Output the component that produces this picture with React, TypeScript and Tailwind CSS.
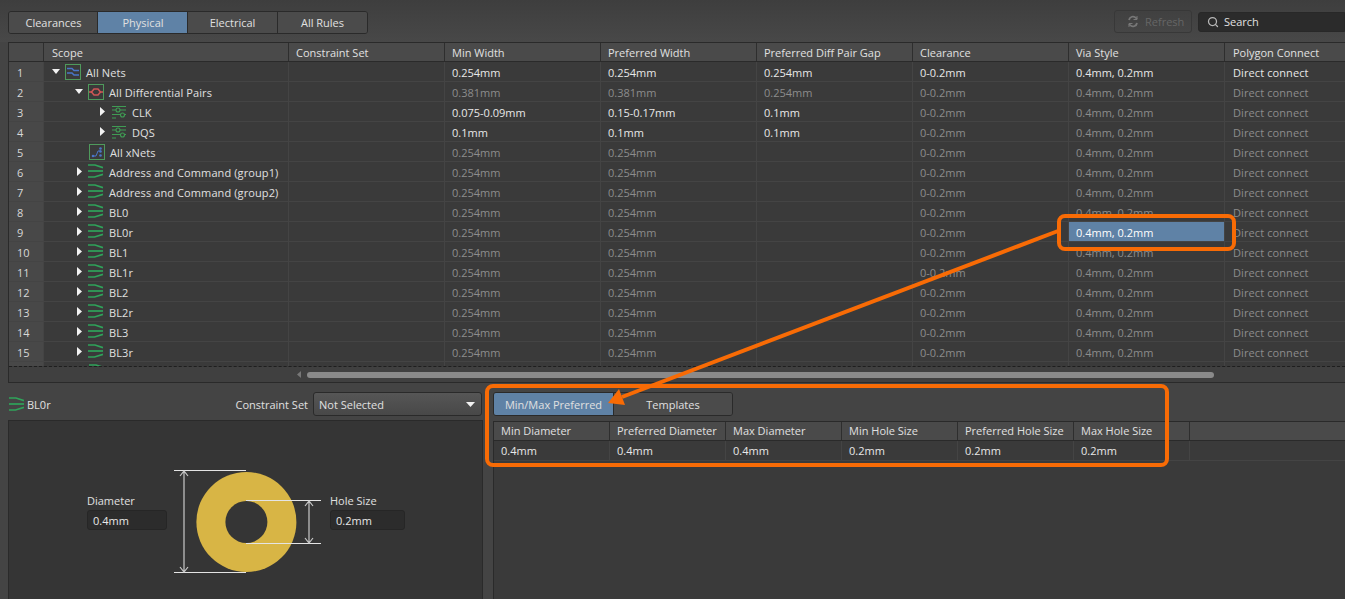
import { Search } from 'lucide-react'

type IconKind = 'nets' | 'pairs' | 'group' | 'xnets' | 'net'

const B = 'text-[#e8e8e8]'
const D = 'text-[#8c8c8c]'

const rows: { name: string; indent: string; arrow?: 'down' | 'right'; icon: IconKind; cells: [string, string, string]; bright?: string; allBright?: boolean }[] = [
  { name: 'All Nets', indent: 'pl-2', arrow: 'down', icon: 'nets', cells: ['0.254mm', '0.254mm', '0.254mm'], allBright: true },
  { name: 'All Differential Pairs', indent: 'pl-[31px]', arrow: 'down', icon: 'pairs', cells: ['0.381mm', '0.381mm', '0.254mm'] },
  { name: 'CLK', indent: 'pl-[56px]', arrow: 'right', icon: 'group', cells: ['0.075-0.09mm', '0.15-0.17mm', '0.1mm'], bright: 'y' },
  { name: 'DQS', indent: 'pl-[56px]', arrow: 'right', icon: 'group', cells: ['0.1mm', '0.1mm', '0.1mm'], bright: 'y' },
  { name: 'All xNets', indent: 'pl-[45px]', icon: 'xnets', cells: ['0.254mm', '0.254mm', ''] },
  ...['Address and Command (group1)', 'Address and Command (group2)', 'BL0', 'BL0r', 'BL1', 'BL1r', 'BL2', 'BL2r', 'BL3', 'BL3r'].map((name) => ({
    name,
    indent: 'pl-[33px]',
    arrow: 'right' as const,
    icon: 'net' as const,
    cells: ['0.254mm', '0.254mm', ''] as [string, string, string],
  })),
]

const headers = ['Min Width', 'Preferred Width', 'Preferred Diff Pair Gap', 'Clearance', 'Via Style']
const viaHeaders = ['Min Diameter', 'Preferred Diameter', 'Max Diameter', 'Min Hole Size', 'Preferred Hole Size', 'Max Hole Size']
const viaValues = ['0.4mm', '0.4mm', '0.4mm', '0.2mm', '0.2mm', '0.2mm']

function NetIcon() {
  return (
    <svg width="15" height="14" viewBox="0 0 15 14" fill="none" stroke="#2fa35a" strokeWidth="1.700" className="shrink-0">
      <path d="M0 1h7l8 2.600" />
      <path d="M0 7h15" />
      <path d="M0 13h6.500l8.500-2.600" />
    </svg>
  )
}

function TreeIcon({ kind }: { kind: IconKind }) {
  if (kind === 'net') return <div className="-mt-[2px]"><NetIcon /></div>
  if (kind === 'group') {
    return (
      <svg width="16" height="16" viewBox="0 0 16 16" fill="none" stroke="#3f9c54" strokeWidth="1.100" className="shrink-0">
        <path d="M1 2.500h14M1 6h4M9 6h6M1 10.500h9M13 10.500h2M1 14h4" />
        <circle cx="7" cy="6" r="2" />
        <circle cx="11.500" cy="11" r="2" />
      </svg>
    )
  }
  return (
    <svg width="16" height="16" viewBox="0 0 16 16" fill="none" className="shrink-0">
      <rect x="0.500" y="0.500" width="15" height="15" stroke="#4f9a5c" />
      {kind === 'nets' && <path d="M2 4.500h5l2 2h5M2 9h5l2 2h5" stroke="#4a76c8" strokeWidth="1.500" />}
      {kind === 'pairs' && (
        <>
          <path d="M1 8h3M12 8h3" stroke="#d05656" strokeWidth="1.500" />
          <path d="M3.500 8l2.500-3h4l2.500 3-2.500 3H6z" stroke="#d05656" strokeWidth="1.500" />
        </>
      )}
      {kind === 'xnets' && (
        <>
          <path d="M4 12h3l2-5h3" stroke="#4a76c8" strokeWidth="1" />
          <circle cx="11.500" cy="4.500" r="1.300" fill="#4a76c8" />
          <circle cx="11.500" cy="7.500" r="1.300" fill="#4a76c8" />
          <circle cx="11.500" cy="11.500" r="1.300" fill="#4a76c8" />
          <circle cx="4" cy="12" r="1.300" fill="#4a76c8" />
        </>
      )}
    </svg>
  )
}

function Arrow({ dir }: { dir?: 'down' | 'right' }) {
  if (dir === 'down') {
    return (
      <svg width="8" height="5" viewBox="0 0 8 5" className="shrink-0 mr-[5px]">
        <path d="M0 0h8L4 5z" fill="#f2f2f2" />
      </svg>
    )
  }
  if (dir === 'right') {
    return (
      <svg width="5" height="9" viewBox="0 0 5 9" className="shrink-0 mr-[6px]">
        <path d="M0 0l5 4.500L0 9z" fill="#f2f2f2" />
      </svg>
    )
  }
  return null
}

function DimensionDrawing() {
  return (
    <svg width="150" height="112" viewBox="0 0 150 112" fill="none" className="shrink-0">
      <circle cx="72.400" cy="56" r="50" fill="#d8b545" />
      <circle cx="72.400" cy="56" r="21" fill="#353535" />
      <g stroke="#e4e4e4" strokeWidth="1">
        <path d="M0 4.500h72M0 106.500h72M72 34.500h75M72 77.500h75" />
      </g>
      <g stroke="#c8c8c8" strokeWidth="1.200">
        <path d="M10 5v101M6 10l4-5 4 5M6 101l4 5 4-5" />
        <path d="M135 35v42M131 40l4-5 4 5M131 72l4 5 4-5" />
      </g>
    </svg>
  )
}

export default function App() {
  return (
    <div className="relative w-[1345px] h-[599px] overflow-hidden flex flex-col bg-[#444444] text-[11px] leading-none text-[#e0e0e0] font-['Open_Sans',sans-serif]">
      {/* top toolbar */}
      <div className="h-[42px] shrink-0 flex items-start pt-[11px] pl-2 bg-gradient-to-b from-[#3e3e3e] to-[#484848]">
        <div className="flex h-[23px] rounded-[3px] border border-[#2a2a2a] overflow-hidden">
          <div className="w-[89px] pl-[1px] flex items-center justify-center bg-[#4b4b4b] border-r border-[#2a2a2a]">Clearances</div>
          <div className="w-[90px] pl-[1px] flex items-center justify-center bg-[#5f82a6] border-r border-[#2a2a2a]">Physical</div>
          <div className="w-[90px] flex items-center justify-center bg-[#4b4b4b] border-r border-[#2a2a2a]">Electrical</div>
          <div className="w-[89px] flex items-center justify-center bg-[#4b4b4b]">All Rules</div>
        </div>
        <div className="ml-auto flex -mt-[1px]">
          <div className="w-[78px] h-[23px] flex items-center pl-[12px] gap-[6px] rounded-[3px] border border-[#383838] text-[#666666]">
            <svg width="12" height="13" viewBox="0 0 12 13" fill="none" stroke="#777777" strokeWidth="1.800">
              <path d="M2 5a4 4 0 0 1 7-2l1 1M10 8a4 4 0 0 1-7 2L2 9" />
              <path d="M10 1v3.500H6.500M2 12V8.500h3.500" strokeWidth="1" />
            </svg>
            Refresh
          </div>
          <div className="ml-[6px] mt-[2px] w-[147px] h-[20px] flex items-center pl-2 pb-[1px] gap-[5px] rounded-l-[3px] bg-[#2b2b2b] border border-[#282828]">
            <Search size={12} strokeWidth={2.500} className="text-[#b8b8b8]" />
            Search
          </div>
        </div>
      </div>

      {/* rules table */}
      <div className="ml-2 h-[341px] shrink-0 flex flex-col border-t border-l border-b border-[#2a2a2a]">
        <div className="h-[19px] shrink-0 flex bg-[#4a4a4a] border-b border-[#2a2a2a]">
          <div className="w-[35px] border-r border-[#2e2e2e]" />
          <div className="w-[245px] pl-[8px] flex items-center border-r border-[#2e2e2e]">Scope</div>
          <div className="w-[156px] pl-[7px] flex items-center border-r border-[#2e2e2e]">Constraint Set</div>
          {headers.map((h) => (
            <div key={h} className="w-[156px] pl-[7px] flex items-center border-r border-[#2e2e2e]">{h}</div>
          ))}
          <div className="flex-1 pl-[8px] flex items-center">Polygon Connect</div>
        </div>
        <div className="h-[305px] overflow-hidden border-b border-dashed border-[#1e1e1e] bg-[#3a3a3a]">
          {[...rows, { name: '', indent: 'pl-[45px]', arrow: undefined, icon: 'net' as IconKind, cells: ['', '', ''] as [string, string, string] }].map((r, i) => {
            const bright = r.allBright || r.bright
            return (
              <div key={i} className="h-[20px] flex border-b border-[#444444]">
                <div className="w-[35px] flex items-center pl-[8px] pt-[2px] bg-[#484848] border-r border-[#444444] text-[#d8d8d8]">
                  {i < 15 ? i + 1 : ''}
                </div>
                <div className={`w-[245px] flex items-center border-r border-[#444444] ${r.indent}`}>
                  <Arrow dir={r.arrow} />
                  <TreeIcon kind={r.icon} />
                  {i < 15 && <span className={r.icon === 'net' ? 'ml-[6px] mt-[2px] whitespace-nowrap tracking-[0.1px]' : 'ml-[5px] mt-[2px] whitespace-nowrap tracking-[0.1px]'}>{r.name}</span>}
                </div>
                <div className="w-[156px] border-r border-[#444444]" />
                {r.cells.map((c, j) => (
                  <div key={j} className={`w-[156px] pl-[7px] pt-[2px] flex items-center border-r border-[#444444] ${bright ? B : D}`}>{c}</div>
                ))}
                <div className={`w-[156px] pl-[7px] pt-[2px] flex items-center border-r border-[#444444] ${r.allBright ? B : D}`}>{i < 15 ? '0-0.2mm' : ''}</div>
                {i === 8 ? (
                  <div className="w-[156px] pl-[7px] pt-[2px] flex items-center border-r border-[#444444] bg-[#5f82a6] text-white">0.4mm, 0.2mm</div>
                ) : (
                  <div className={`w-[156px] pl-[7px] pt-[2px] flex items-center border-r border-[#444444] ${r.allBright ? B : D}`}>{i < 15 ? '0.4mm, 0.2mm' : ''}</div>
                )}
                <div className={`flex-1 pl-[8px] pt-[2px] flex items-center tracking-[0.1px] ${r.allBright ? B : D}`}>{i < 15 ? 'Direct connect' : ''}</div>
              </div>
            )
          })}
        </div>
        <div className="flex-1 flex items-center bg-[#404040] pl-[288px]">
          <svg width="4" height="7" viewBox="0 0 4 7" className="mr-[6px]"><path d="M4 0v7L0 3.500z" fill="#777777" /></svg>
          <div className="w-[907px] h-[6px] rounded-[3px] bg-[#8a8a8a]" />
        </div>
      </div>

      {/* detail area */}
      <div className="flex-1 min-h-0 flex pl-2 bg-[#444444]">
        <div className="w-[475px] shrink-0 flex flex-col">
          <div className="h-[37px] shrink-0 flex items-center pt-[5px]">
            <div className="ml-[1px]"><NetIcon /></div>
            <span className="ml-[3px] mt-[1px]">BL0r</span>
            <span className="ml-auto mr-[5px] mt-[1px]">Constraint Set</span>
            <div className="w-[169px] h-[24px] mr-[1px] flex items-center justify-between pl-[5px] pr-[6px] rounded-[3px] border border-[#2a2a2a] bg-gradient-to-b from-[#565656] to-[#484848]">
              <span className="mt-[1px]">Not Selected</span>
              <svg width="9" height="5" viewBox="0 0 9 5"><path d="M0 0h9L4.500 5z" fill="#f2f2f2" /></svg>
            </div>
          </div>
          <div className="flex-1 flex items-start pl-[78px] pt-[45px] bg-[#353535] border-t border-l border-r border-[#2a2a2a]">
            <div className="w-[80px] mt-[29px] mr-[7px] shrink-0">
              <div>Diameter</div>
              <div className="mt-[4px] h-[20px] flex items-center pl-[5px] rounded-[3px] bg-[#2c2c2c] border border-[#262626] text-[#e8e8e8]">0.4mm</div>
            </div>
            <DimensionDrawing />
            <div className="w-[75px] mt-[29px] ml-[6px] shrink-0">
              <div>Hole Size</div>
              <div className="mt-[4px] h-[20px] flex items-center pl-[5px] rounded-[3px] bg-[#2c2c2c] border border-[#262626] text-[#e8e8e8]">0.2mm</div>
            </div>
          </div>
        </div>
        <div className="flex-1 ml-[10px] flex flex-col">
          <div className="h-[38px] shrink-0 pt-[9px]">
            <div className="flex w-[240px] h-[24px] rounded-[3px] border border-[#2a2a2a] overflow-hidden">
              <div className="w-[120px] flex items-center justify-center bg-[#5f82a6] border-r border-[#2a2a2a]">Min/Max Preferred</div>
              <div className="flex-1 flex items-center justify-center bg-[#4b4b4b]">Templates</div>
            </div>
          </div>
          <div className="flex-1 bg-[#3a3a3a] border-l border-[#2a2a2a]">
            <div className="h-[20px] flex bg-[#4a4a4a] border-t border-b border-[#2a2a2a]">
              {viaHeaders.map((h) => (
                <div key={h} className="w-[116px] pl-[7px] pb-[1px] flex items-center border-r border-[#2e2e2e]">{h}</div>
              ))}
            </div>
            <div className="h-[20px] flex border-b border-[#444444]">
              {viaValues.map((v, i) => (
                <div key={i} className="w-[116px] pl-[7px] flex items-center border-r border-[#444444] text-[#e8e8e8]">{v}</div>
              ))}
            </div>
          </div>
        </div>
      </div>

      {/* orange callouts */}
      <svg width="1345" height="599" viewBox="0 0 1345 599" fill="none" className="absolute left-0 top-0 pointer-events-none">
        <rect x="1059" y="216" width="175" height="33" rx="6" stroke="#f86b05" strokeWidth="4" />
        <rect x="487" y="386" width="680" height="79" rx="6" stroke="#f86b05" strokeWidth="4" />
        <path d="M1058 231L622 397" stroke="#f86b05" strokeWidth="4" />
        <path d="M608 403L619 389L625 405Z" fill="#f86b05" />
      </svg>
    </div>
  )
}
